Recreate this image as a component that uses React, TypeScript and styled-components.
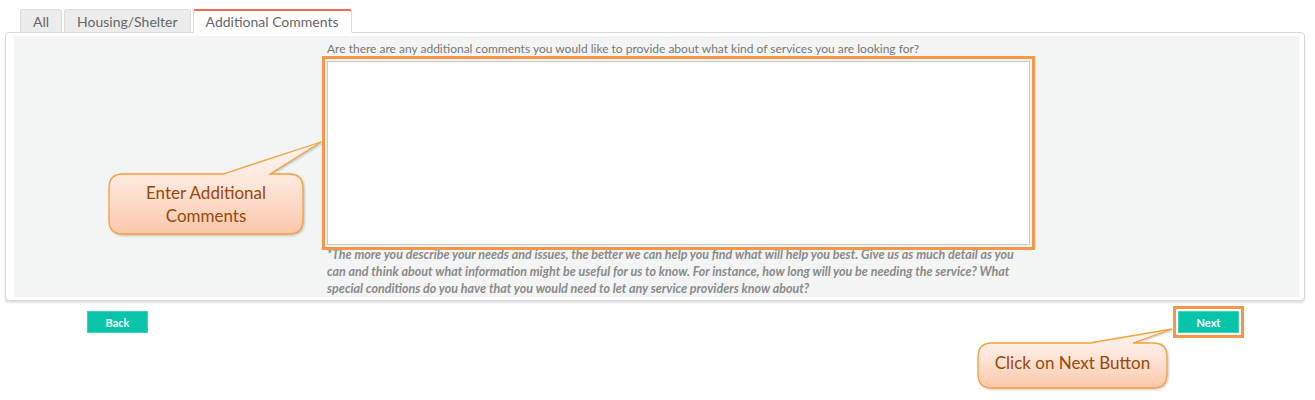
import React from 'react';
import styled, { createGlobalStyle } from 'styled-components';

const Global = createGlobalStyle`
  html, body { margin: 0; padding: 0; background: #fff; }
  body { font-family: Lato, "Liberation Sans", sans-serif; }
`;

const Page = styled.div`
  position: relative;
  width: 1315px;
  height: 400px;
  padding-top: 9px;
  box-sizing: border-box;
  overflow: hidden;
`;

const TabBar = styled.div`
  display: flex;
  gap: 2px;
  padding-left: 20px;
  position: relative;
  z-index: 1;
  margin-bottom: -1px;
`;

const Tab = styled.div<{ $active?: boolean }>`
  height: 24px;
  box-sizing: border-box;
  padding: 0 12px;
  display: flex;
  align-items: center;
  font-size: 14px;
  color: #666;
  background: ${(p) => (p.$active ? '#fff' : '#ececec')};
  border: 1px solid #dcdcdc;
  border-top: ${(p) => (p.$active ? '2px solid #f26a4f' : '1px solid #dcdcdc')};
  border-bottom-color: ${(p) => (p.$active ? '#fff' : '#dcdcdc')};
  border-radius: 3px 3px 0 0;
`;

const Panel = styled.div`
  margin: 0 10px 0 5px;
  background: #fff;
  border: 1px solid #d8d8d8;
  border-radius: 4px;
  box-shadow: 0 2px 2px rgba(0, 0, 0, 0.12);
  padding: 3px 5px 3px 8px;
`;

const FormArea = styled.div`
  background: #f2f5f4;
  padding: 6px 0 0 313px;
`;

const Question = styled.div`
  font-size: 12px;
  line-height: 14px;
  color: #777;
  margin-bottom: 5px;
  white-space: nowrap;
`;

const CommentBox = styled.textarea`
  display: block;
  width: 703px;
  height: 184px;
  box-sizing: border-box;
  margin: 0;
  border: 1px solid #c8c8c8;
  background: #fff;
  resize: none;
  outline: 3px solid #f79646;
  outline-offset: 2px;
`;

const HelpText = styled.div`
  margin-top: 1px;
  font-size: 12.5px;
  line-height: 17px;
  font-style: italic;
  font-weight: 700;
  color: #8a8a8a;
  white-space: nowrap;
`;

const ButtonRow = styled.div`
  display: flex;
  justify-content: space-between;
  margin-top: 10px;
  padding: 0 76px 0 87px;
`;

const ActionButton = styled.button<{ $highlight?: boolean }>`
  width: 61px;
  height: 22px;
  box-sizing: border-box;
  border: 1px solid #3fd3bd;
  background: #08c4a8;
  color: #fff;
  font-family: Lato, "Liberation Sans", sans-serif;
  font-size: 11px;
  font-weight: 700;
  padding: 0;
  outline: ${(p) => (p.$highlight ? '3px solid #f79646' : 'none')};
  outline-offset: 2px;
`;

const CalloutWrap = styled.div`
  position: absolute;
  left: 0;
  top: 0;
  pointer-events: none;
`;

const CalloutShape = styled.svg`
  position: absolute;
  overflow: visible;
  filter: drop-shadow(1.5px 1.5px 1px rgba(0, 0, 0, 0.22));
`;

const CalloutLabel = styled.div<{ $padBottom: number }>`
  position: absolute;
  display: flex;
  align-items: center;
  justify-content: center;
  text-align: center;
  box-sizing: border-box;
  padding-bottom: ${(p) => p.$padBottom}px;
  font-family: Lato, "Liberation Sans", sans-serif;
  font-size: 17px;
  line-height: 23px;
  color: #984807;
`;

type CalloutProps = {
  id: string;
  x: number;
  y: number;
  w: number;
  h: number;
  b1: number;
  b2: number;
  tipX: number;
  tipY: number;
  padBottom?: number;
  children: React.ReactNode;
};

function Callout({ id, x, y, w, h, b1, b2, tipX, tipY, padBottom = 0, children }: CalloutProps) {
  const r = 14;
  const d = `M ${x + r} ${y} L ${b1} ${y} L ${tipX} ${tipY} L ${b2} ${y} L ${x + w - r} ${y}
    Q ${x + w} ${y} ${x + w} ${y + r} L ${x + w} ${y + h - r} Q ${x + w} ${y + h} ${x + w - r} ${y + h}
    L ${x + r} ${y + h} Q ${x} ${y + h} ${x} ${y + h - r} L ${x} ${y + r} Q ${x} ${y} ${x + r} ${y} Z`;
  const minX = x - 2;
  const minY = tipY - 2;
  const maxX = Math.max(x + w, tipX) + 4;
  const maxY = y + h + 4;
  const vw = maxX - minX;
  const vh = maxY - minY;
  return (
    <CalloutWrap>
      <CalloutShape
        style={{ left: minX, top: minY }}
        width={vw}
        height={vh}
        viewBox={`${minX} ${minY} ${vw} ${vh}`}
      >
        <defs>
          <linearGradient id={id} x1="0" y1="0" x2="0" y2="1">
            <stop offset="0" stopColor="#fff6f2" />
            <stop offset="0.45" stopColor="#fde6da" />
            <stop offset="1" stopColor="#fcc7aa" />
          </linearGradient>
        </defs>
        <path d={d} fill={`url(#${id})`} stroke="#f5a23c" strokeWidth="1.3" />
      </CalloutShape>
      <CalloutLabel $padBottom={padBottom} style={{ left: x, top: y, width: w, height: h }}>
        <div>{children}</div>
      </CalloutLabel>
    </CalloutWrap>
  );
}

export default function App() {
  return (
    <>
      <Global />
      <Page>
        <TabBar>
          <Tab>All</Tab>
          <Tab>Housing/Shelter</Tab>
          <Tab $active>Additional Comments</Tab>
        </TabBar>
        <Panel>
          <FormArea>
            <Question>
              Are there are any additional comments you would like to provide about what kind of services you are looking for?
            </Question>
            <CommentBox />
            <HelpText>
              *The more you describe your needs and issues, the better we can help you find what will help you best. Give us as much detail as you
              <br />
              can and think about what information might be useful for us to know. For instance, how long will you be needing the service? What
              <br />
              special conditions do you have that you would need to let any service providers know about?
            </HelpText>
          </FormArea>
        </Panel>
        <ButtonRow>
          <ActionButton>Back</ActionButton>
          <ActionButton $highlight>Next</ActionButton>
        </ButtonRow>
        <Callout id="cg1" x={109} y={174} w={194} h={60} b1={223} b2={270} tipX={321} tipY={142}>
          Enter Additional
          <br />
          Comments
        </Callout>
        <Callout id="cg2" x={978} y={343} w={189} h={45} b1={1090} b2={1133} tipX={1172} tipY={329} padBottom={7}>
          Click on Next Button
        </Callout>
      </Page>
    </>
  );
}
